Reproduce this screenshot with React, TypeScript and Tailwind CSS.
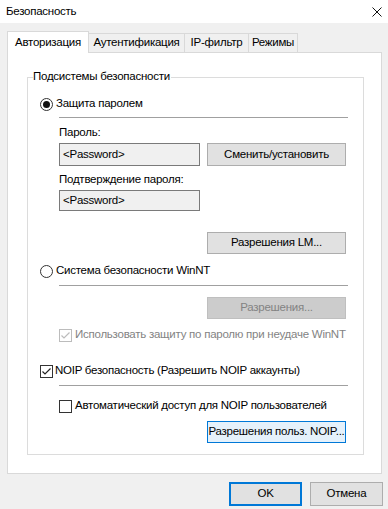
import React from "react";

function Radio({ checked }: { checked?: boolean }) {
  return (
    <span className="flex items-center justify-center w-[13px] h-[13px] rounded-full border border-[#333333] bg-white shrink-0">
      {checked && <span className="w-[7px] h-[7px] rounded-full bg-[#111111]" />}
    </span>
  );
}

function Check({ checked, disabled }: { checked?: boolean; disabled?: boolean }) {
  return (
    <span
      className={
        disabled
          ? "flex items-center justify-center w-[13px] h-[13px] border border-[#bcbcbc] bg-white shrink-0"
          : "flex items-center justify-center w-[13px] h-[13px] border border-[#333333] bg-white shrink-0"
      }
    >
      {checked && (
        <svg width="11" height="11" viewBox="0 0 11 11">
          <polyline
            points="1.5,5.5 4,8 9.5,2.5"
            fill="none"
            stroke={disabled ? "#bcbcbc" : "#222222"}
            strokeWidth="1.2"
          />
        </svg>
      )}
    </span>
  );
}

function Btn({ label, variant = "normal" }: { label: string; variant?: "normal" | "disabled" | "focus" }) {
  const cls =
    variant === "disabled"
      ? "bg-[#cccccc] border-[#bfbfbf] text-[#838383]"
      : variant === "focus"
        ? "bg-[#e5f1fb] border-[#0078d7] text-black"
        : "bg-[#e1e1e1] border-[#adadad] text-black";
  return (
    <div className={`ml-[179px] w-[139px] h-[22px] border flex items-center justify-center whitespace-nowrap ${cls}`}>
      {label}
    </div>
  );
}

export default function App() {
  const tabs = [
    { label: "Аутентификация", w: "w-[97px]" },
    { label: "IP-фильтр", w: "w-[65px]" },
    { label: "Режимы", w: "w-[50px]" },
  ];

  return (
    <div className="w-[388px] h-[509px] bg-[#f0f0f0] text-[11.5px] tracking-[-0.25px] text-black font-['Liberation_Sans',sans-serif] leading-none whitespace-nowrap overflow-hidden">
      {/* title bar */}
      <div className="h-[23px] bg-white flex items-center justify-between pl-[6px] pr-[6px]">
        <span>Безопасность</span>
        <svg width="10" height="10" viewBox="0 0 10 10">
          <path d="M0.5 0.5 L9.5 9.5 M9.5 0.5 L0.5 9.5" stroke="#111111" strokeWidth="1" />
        </svg>
      </div>

      {/* tabs */}
      <div className="mt-[8px] pl-[7px] flex items-end h-[21px]">
        <div className="relative z-10 w-[82px] h-[22px] -mb-px bg-white border border-b-0 border-[#d9d9d9] flex items-center justify-center">
          Авторизация
        </div>
        {tabs.map((t) => (
          <div
            key={t.label}
            className={`${t.w} h-[19px] -ml-px border border-b-0 border-[#d9d9d9] bg-[#f0f0f0] flex items-center justify-center`}
          >
            {t.label}
          </div>
        ))}
      </div>

      {/* panel */}
      <div className="ml-[7px] w-[375px] h-[422px] bg-white border border-[#d9d9d9]">
        <div className="relative ml-[19px] mt-[24px] w-[337px] h-[378px] border border-[#dcdcdc] flex flex-col">
          <span className="absolute -top-[7px] left-[5px] bg-white pr-[1px]">Подсистемы безопасности</span>

          <div className="mt-[18px] pl-[12px] h-[16px] flex items-center gap-[3px]">
            <Radio checked />
            <span>Защита паролем</span>
          </div>
          <div className="mt-[5px] ml-[31px] w-[289px] h-px bg-[#a0a0a0]" />

          <div className="mt-[7px] ml-[31px] h-[16px] flex items-center">Пароль:</div>
          <div className="mt-[2px] ml-[31px] flex gap-[7px] h-[23px]">
            <div className="w-[141px] h-[23px] bg-[#f0f0f0] border border-[#7a7a7a] flex items-center pl-[3px]">
              &lt;Password&gt;
            </div>
            <div className="w-[139px] h-[23px] bg-[#e1e1e1] border border-[#adadad] flex items-center justify-center">
              Сменить/установить
            </div>
          </div>

          <div className="mt-[6px] ml-[31px] h-[16px] flex items-center">Подтверждение пароля:</div>
          <div className="mt-[2px] ml-[31px] w-[141px] h-[21px] bg-[#f0f0f0] border border-[#7a7a7a] flex items-center pl-[3px]">
            &lt;Password&gt;
          </div>

          <div className="mt-[21px]">
            <Btn label="Разрешения LM..." />
          </div>

          <div className="mt-[9px] pl-[12px] h-[16px] flex items-center gap-[3px]">
            <Radio />
            <span>Система безопасности WinNT</span>
          </div>
          <div className="mt-[6px] ml-[31px] w-[289px] h-px bg-[#a0a0a0]" />

          <div className="mt-[11px]">
            <Btn label="Разрешения..." variant="disabled" />
          </div>

          <div className="mt-[8px] ml-[31px] h-[16px] flex items-center gap-[3px] text-[#838383]">
            <Check checked disabled />
            <span>Использовать защиту по паролю при неудаче WinNT</span>
          </div>

          <div className="mt-[20px] pl-[12px] h-[16px] flex items-center gap-[2px]">
            <Check checked />
            <span>NOIP безопасность (Разрешить NOIP аккаунты)</span>
          </div>
          <div className="mt-[6px] ml-[31px] w-[289px] h-px bg-[#a0a0a0]" />

          <div className="mt-[12px] ml-[31px] h-[16px] flex items-center gap-[3px]">
            <Check />
            <span>Автоматический доступ для NOIP пользователей</span>
          </div>

          <div className="mt-[7px]">
            <Btn label="Разрешения польз. NOIP..." variant="focus" />
          </div>
        </div>
      </div>

      {/* dialog buttons */}
      <div className="mt-[8px] pr-[5px] flex justify-end gap-[8px]">
        <div className="w-[73px] h-[24px] bg-[#e1e1e1] border-2 border-[#0078d7] flex items-center justify-center">
          OK
        </div>
        <div className="w-[73px] h-[24px] bg-[#e1e1e1] border border-[#adadad] flex items-center justify-center">
          Отмена
        </div>
      </div>
    </div>
  );
}
